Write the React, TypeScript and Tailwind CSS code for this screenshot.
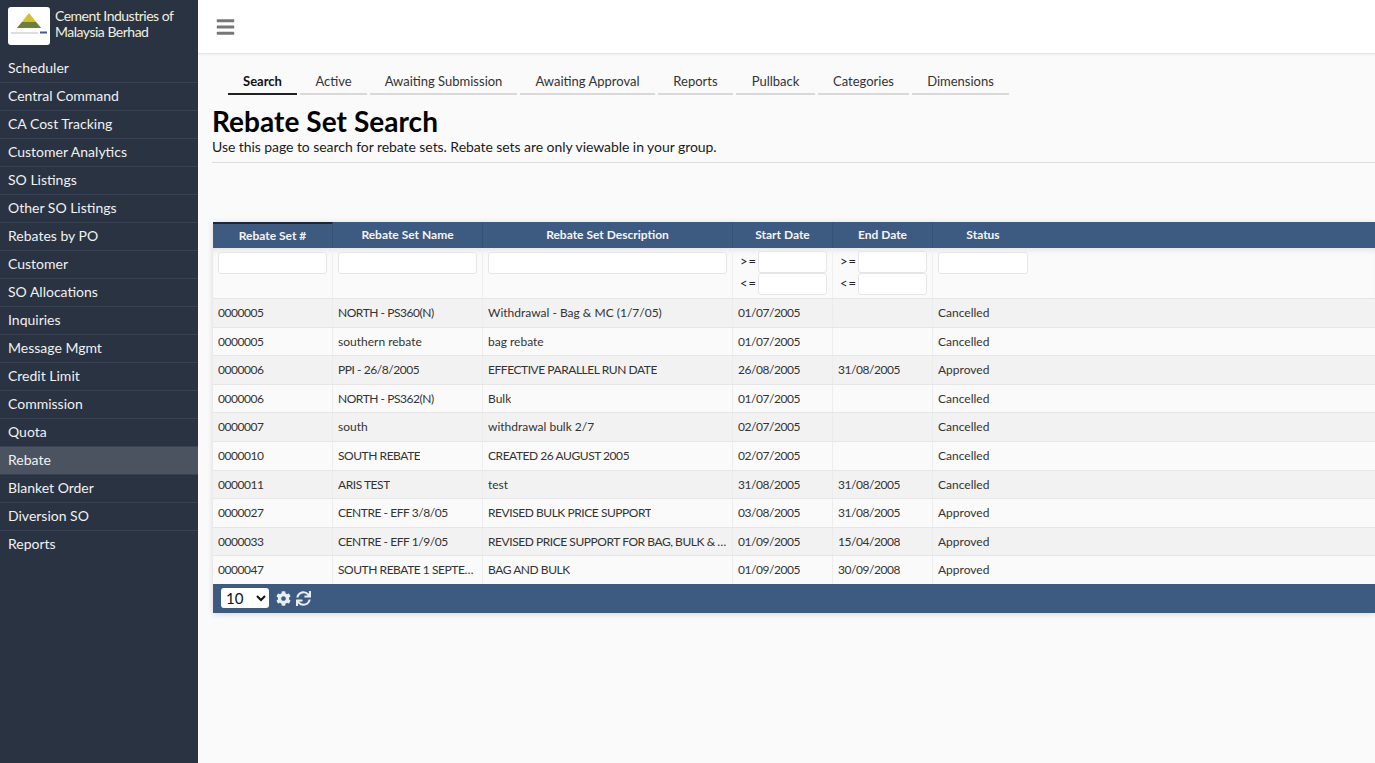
import React from 'react'
import { FaBars, FaCog, FaSync } from 'react-icons/fa'

const menu = [
  'Scheduler',
  'Central Command',
  'CA Cost Tracking',
  'Customer Analytics',
  'SO Listings',
  'Other SO Listings',
  'Rebates by PO',
  'Customer',
  'SO Allocations',
  'Inquiries',
  'Message Mgmt',
  'Credit Limit',
  'Commission',
  'Quota',
  'Rebate',
  'Blanket Order',
  'Diversion SO',
  'Reports',
]

const tabs = [
  { label: 'Search', width: 'w-[69px]' },
  { label: 'Active', width: 'w-[67px]' },
  { label: 'Awaiting Submission', width: 'w-[147px]' },
  { label: 'Awaiting Approval', width: 'w-[135px]' },
  { label: 'Reports', width: 'w-[75px]' },
  { label: 'Pullback', width: 'w-[79px]' },
  { label: 'Categories', width: 'w-[91px]' },
  { label: 'Dimensions', width: 'w-[97px]' },
]

const rows = [
  ['0000005', 'NORTH - PS360(N)', 'Withdrawal - Bag & MC (1/7/05)', '01/07/2005', '', 'Cancelled'],
  ['0000005', 'southern rebate', 'bag rebate', '01/07/2005', '', 'Cancelled'],
  ['0000006', 'PPI - 26/8/2005', 'EFFECTIVE PARALLEL RUN DATE', '26/08/2005', '31/08/2005', 'Approved'],
  ['0000006', 'NORTH - PS362(N)', 'Bulk', '01/07/2005', '', 'Cancelled'],
  ['0000007', 'south', 'withdrawal bulk 2/7', '02/07/2005', '', 'Cancelled'],
  ['0000010', 'SOUTH REBATE', 'CREATED 26 AUGUST 2005', '02/07/2005', '', 'Cancelled'],
  ['0000011', 'ARIS TEST', 'test', '31/08/2005', '31/08/2005', 'Cancelled'],
  ['0000027', 'CENTRE - EFF 3/8/05', 'REVISED BULK PRICE SUPPORT', '03/08/2005', '31/08/2005', 'Approved'],
  ['0000033', 'CENTRE - EFF 1/9/05', 'REVISED PRICE SUPPORT FOR BAG, BULK & MC', '01/09/2005', '15/04/2008', 'Approved'],
  ['0000047', 'SOUTH REBATE 1 SEPTEMBER 2005', 'BAG AND BULK', '01/09/2005', '30/09/2008', 'Approved'],
]

const colWidths = ['w-[120px]', 'w-[150px]', 'w-[250px]', 'w-[100px]', 'w-[100px]', 'w-[100px]']
const headers = ['Rebate Set #', 'Rebate Set Name', 'Rebate Set Description', 'Start Date', 'End Date', 'Status']

const FilterInput: React.FC<{ className: string }> = ({ className }) => (
  <input className={`h-[22px] bg-white border border-[#e6e6e6] rounded-[3px] ${className}`} />
)

const DateFilter: React.FC = () => (
  <div className="flex flex-col">
    <div className="flex items-center justify-between">
      <span className="pl-[2px] text-[13px] text-[#222] tracking-[1px]">&gt;=</span>
      <FilterInput className="w-[69px]" />
    </div>
    <div className="flex items-center justify-between">
      <span className="pl-[2px] text-[13px] text-[#222] tracking-[1px]">&lt;=</span>
      <FilterInput className="w-[69px]" />
    </div>
  </div>
)

const App: React.FC = () => {
  return (
    <div className="flex h-[763px] w-[1375px] overflow-hidden bg-[#fafafa] font-['Lato',sans-serif]">
      {/* Sidebar */}
      <aside className="w-[198px] shrink-0 bg-[#2a3342] text-[#f1f1f1]">
        <div className="flex h-[54px] items-start gap-[5px] pl-[8px] pt-[7px]">
          <div className="h-[38px] w-[42px] shrink-0 rounded-[3px] bg-white">
            <svg width="42" height="38" viewBox="0 0 42 38">
              <path d="M21 6 L33 21 H9 Z" fill="#d6bf2c" />
              <path d="M14 15 H28 L33 21 H9 Z" fill="#6f7d3a" />
              <path d="M3 26 H30" stroke="#b9bcc1" strokeWidth="1" />
              <path d="M32 25.5 H39" stroke="#3f5aa0" strokeWidth="2" />
            </svg>
          </div>
          <div className="pt-[1px] text-[14px] leading-[16px] tracking-[-0.5px] text-[#f3efdc]">
            Cement Industries of
            <br />
            Malaysia Berhad
          </div>
        </div>
        <nav className="flex flex-col">
          {menu.map((item, i) => (
            <a
              key={item}
              className={`flex h-[28px] items-center border-t pb-[2px] pl-[8px] text-[14px] ${
                i === 0 ? 'border-t-transparent' : 'border-t-[#384252]'
              } ${item === 'Rebate' ? 'bg-[#4b5360]' : ''}`}
            >
              {item}
            </a>
          ))}
        </nav>
      </aside>

      <div className="flex min-w-0 flex-1 flex-col">
        {/* Top bar */}
        <header className="flex h-[54px] shrink-0 items-center border-b border-[#e3e3e3] bg-white pl-[18px] shadow-[0_1px_2px_rgba(0,0,0,0.05)]">
          <FaBars className="text-[#777] text-[19px] h-[20px] w-[19px]" />
        </header>

        <main className="flex flex-col pl-[14px]">
          {/* Tabs */}
          <div className="flex gap-[3px] pl-[16px] pt-[19px]">
            {tabs.map((tab, i) => (
              <div
                key={tab.label}
                className={`h-[22px] border-b-2 text-center text-[13px] leading-[16px] ${tab.width} ${
                  i === 0 ? 'border-[#222] font-bold text-[#111]' : 'border-[#d9d9d9] text-[#333]'
                }`}
              >
                {tab.label}
              </div>
            ))}
          </div>

          <h1 className="mt-[9px] text-[28px] font-bold leading-[34px] tracking-[0.05px] text-black">Rebate Set Search</h1>
          <p className="text-[14px] leading-[17px] tracking-[-0.06px] text-[#1a1a1a]">
            Use this page to search for rebate sets. Rebate sets are only viewable in your group.
          </p>
          <div className="mt-[7px] h-px bg-[#dcdcdc]" />

          {/* Grid */}
          <div className="ml-[1px] mt-[59px] shadow-[0_1px_6px_rgba(0,0,0,0.15)]">
            <div className="flex h-[26px] bg-[#3d5a80] text-[12px] font-bold text-[#f5f5f5]">
              {headers.map((h, i) => (
                <div
                  key={h}
                  className={`flex items-center justify-center border-r border-[#37527a] ${colWidths[i]} ${
                    i === 0 ? 'border-t-2 border-t-[#1f2733]' : ''
                  } ${i === 5 ? 'border-r-0' : ''}`}
                >
                  {h}
                </div>
              ))}
            </div>

            <div className="flex h-[50px] bg-[#fafafa] shadow-[inset_0_6px_6px_-4px_rgba(0,0,0,0.1)]">
              <div className={`${colWidths[0]} border-r border-[#efefef] px-[5px] pt-[3px]`}>
                <FilterInput className="w-full" />
              </div>
              <div className={`${colWidths[1]} border-r border-[#efefef] px-[5px] pt-[3px]`}>
                <FilterInput className="w-full" />
              </div>
              <div className={`${colWidths[2]} border-r border-[#efefef] px-[5px] pt-[3px]`}>
                <FilterInput className="w-full" />
              </div>
              <div className={`${colWidths[3]} border-r border-[#efefef] px-[5px] pt-[3px]`}>
                <DateFilter />
              </div>
              <div className={`${colWidths[4]} border-r border-[#efefef] px-[5px] pt-[3px]`}>
                <DateFilter />
              </div>
              <div className={`${colWidths[5]} px-[5px] pt-[3px]`}>
                <FilterInput className="w-[90px]" />
              </div>
            </div>

            {rows.map((row, r) => (
              <div
                key={r}
                className={`flex h-[28.6px] border-t border-[#e6e6e6] text-[12px] text-[#333] ${
                  r % 2 === 0 ? 'bg-[#f2f2f2]' : 'bg-[#fafafa]'
                }`}
              >
                {row.map((cell, c) => (
                  <div
                    key={c}
                    className={`flex min-w-0 items-center border-r border-[#ededed] px-[5px] pt-[0.5px] ${colWidths[c]} ${
                      c === 5 ? 'border-r-0' : ''
                    }`}
                  >
                    {/* caps and digits run narrower in the reference */}
                    <span className={`truncate ${cell === cell.toUpperCase() ? 'tracking-[-0.45px]' : ''}`}>{cell}</span>
                  </div>
                ))}
              </div>
            ))}

            <div className="flex h-[29px] items-center bg-[#3d5a80] pl-[8px]">
              <select className="h-[20px] w-[48px] rounded-[3px] bg-white pl-[1px] text-[15px] text-[#111]" defaultValue="10">
                <option value="10">10</option>
              </select>
              <FaCog className="ml-[7px] h-[15px] w-[15px] text-[#e8edf3]" />
              <FaSync className="ml-[5px] h-[15px] w-[15px] text-[#e8edf3]" />
            </div>
          </div>
        </main>
      </div>
    </div>
  )
}

export default App
